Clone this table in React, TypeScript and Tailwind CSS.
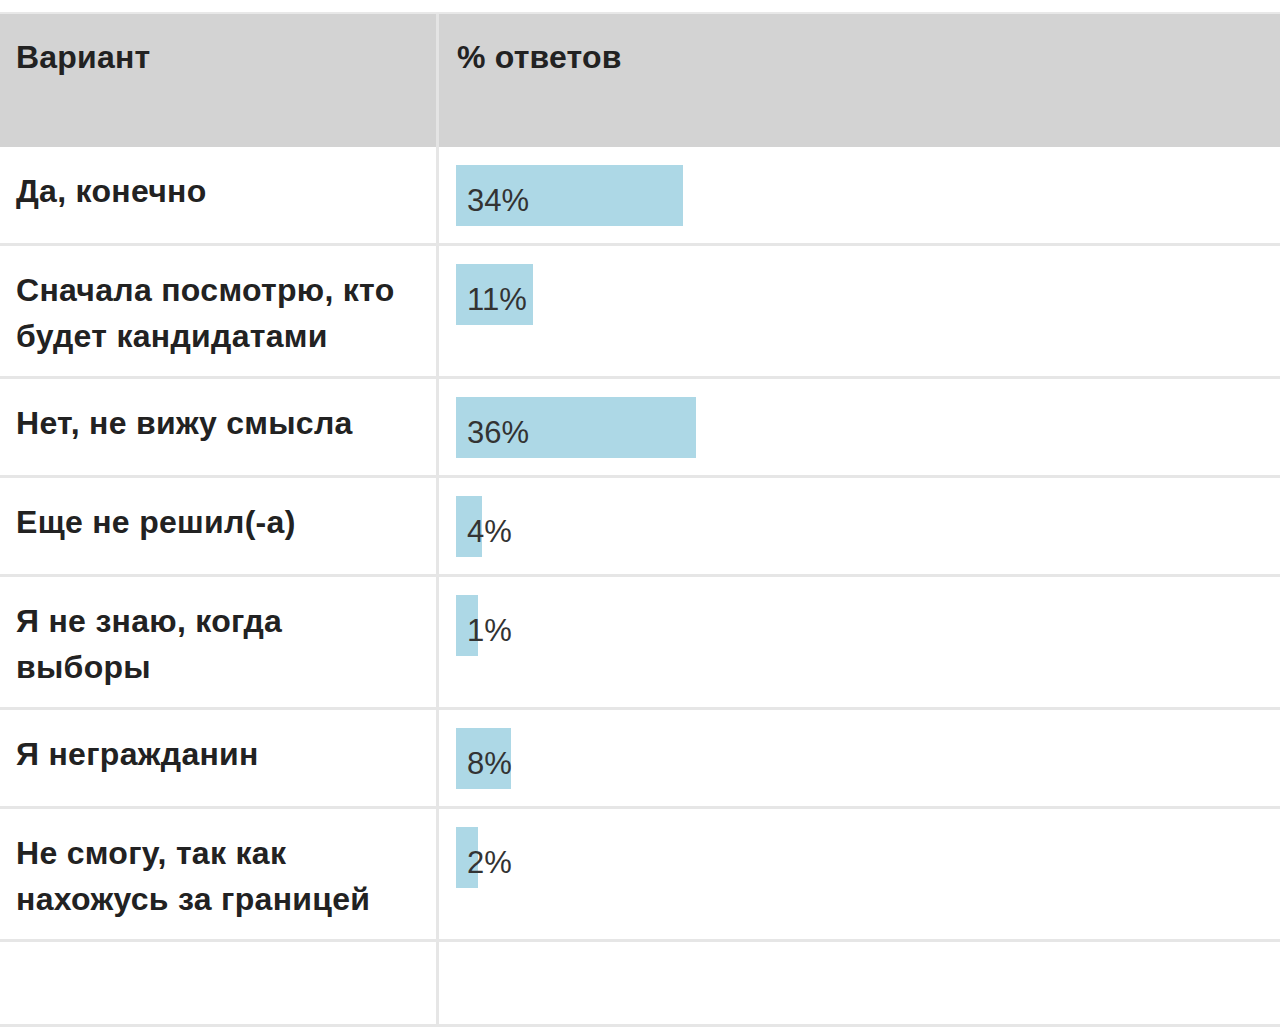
// Poll results table
type Row = { label: string; pct: number; width: number };

const rows: Row[] = [
  { label: "Да, конечно", pct: 34, width: 227 },
  { label: "Сначала посмотрю, кто будет кандидатами", pct: 11, width: 77 },
  { label: "Нет, не вижу смысла", pct: 36, width: 240 },
  { label: "Еще не решил(-а)", pct: 4, width: 26 },
  { label: "Я не знаю, когда выборы", pct: 1, width: 22 },
  { label: "Я негражданин", pct: 8, width: 55 },
  { label: "Не смогу, так как нахожусь за границей", pct: 2, width: 22 },
];

export default function App() {
  return (
    <div className="min-h-screen bg-white pt-[12px] font-['Liberation_Sans',Arial,sans-serif] text-[31px] leading-[46px] text-[#222]">
      <div className="w-full">
        <div className="grid grid-cols-[439px_1fr] border-t-2 border-[#e8e8e8] bg-[#d3d3d3]">
          <div className="h-[133px] border-r-[3px] border-[#e4e4e4] pl-[16px] pt-[20px] text-[32px] font-bold tracking-[0.2px]">
            Вариант
          </div>
          <div className="h-[133px] pl-[18px] pt-[20px] text-[32px] font-bold tracking-[0.2px]">
            % ответов
          </div>
        </div>

        {rows.map((row) => (
          <div
            key={row.label}
            className="grid grid-cols-[439px_1fr] border-b-[3px] border-[#e6e6e6]"
          >
            <div className="border-r-[3px] border-[#e6e6e6] pl-[16px] pr-[30px] pt-[21px] pb-[17px] text-[32px] font-bold tracking-[0.3px]">
              {row.label}
            </div>
            <div className="pl-[17px] pt-[18px] pb-[17px]">
              <div
                className="h-[61px] whitespace-nowrap bg-[#add8e6] pl-[11px] pt-[13px] text-[#333]"
                style={{ width: row.width }}
              >
                {row.pct}%
              </div>
            </div>
          </div>
        ))}

        <div className="grid grid-cols-[439px_1fr] border-b-[3px] border-[#e6e6e6]">
          <div className="h-[82px] border-r-[3px] border-[#e6e6e6]" />
          <div className="h-[82px]" />
        </div>
      </div>
    </div>
  );
}
